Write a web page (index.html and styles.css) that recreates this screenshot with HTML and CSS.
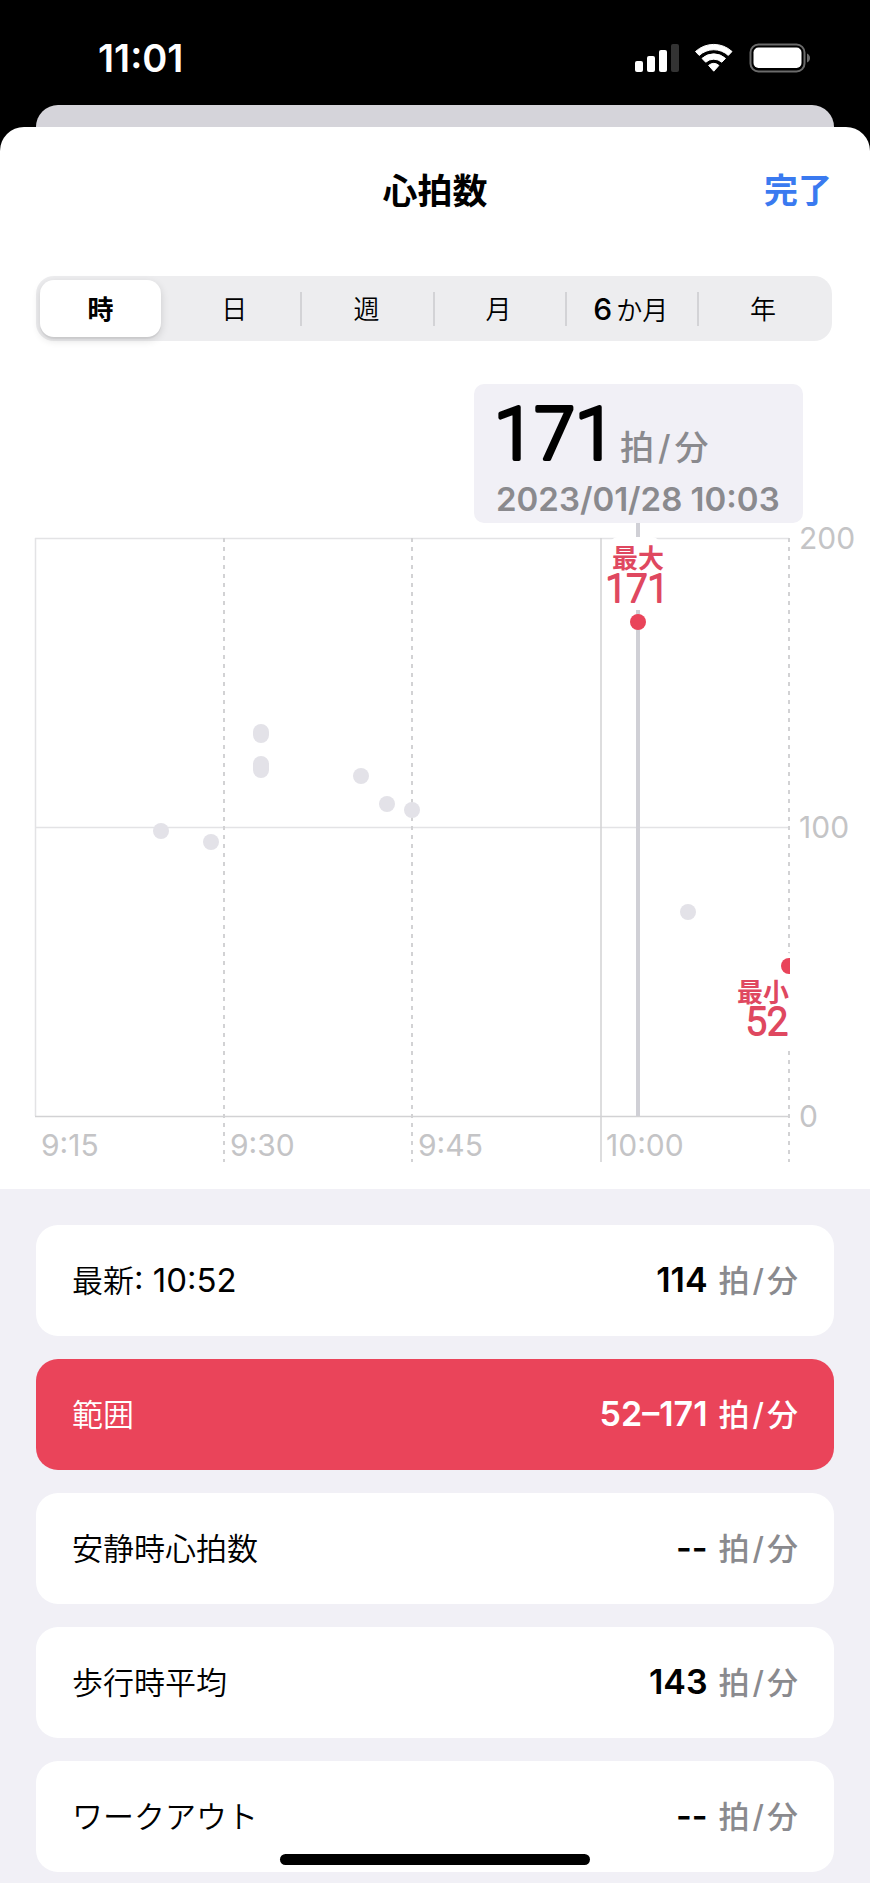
FILE: index.html
```html
<!DOCTYPE html>
<html lang="ja">
<head>
<meta charset="utf-8">
<meta name="viewport" content="width=device-width, initial-scale=1">
<title>心拍数</title>
<link rel="stylesheet" href="styles.css">
</head>
<body>
<div class="screen">
  <header class="status">
    <time class="clock">11:01</time>
    <svg class="status-icons" viewBox="0 0 176 30" width="176" height="30" aria-hidden="true">
      <g fill="#fff">
        <rect x="0" y="18" width="8" height="11" rx="2"/>
        <rect x="12" y="13" width="8" height="16" rx="2"/>
        <rect x="24" y="7" width="8" height="22" rx="2"/>
        <rect x="36" y="1" width="8" height="28" rx="2" fill="#333"/>
        <path d="M60.500 8.500A27 27 0 0 1 97 8.500L93.300 12.400A21.500 21.500 0 0 0 64.200 12.400Z" stroke="#fff" stroke-linejoin="round"/>
        <path d="M67 15.400A17.500 17.500 0 0 1 90.500 15.400L86.800 19.200A12.200 12.200 0 0 0 70.700 19.200Z" stroke="#fff" stroke-linejoin="round"/>
        <path d="M73.600 22.400A8.300 8.300 0 0 1 83.900 22.400L78.750 28.200Z" stroke="#fff" stroke-linejoin="round"/>
        <rect x="118.500" y="4.500" width="48" height="20.500" rx="5"/>
      </g>
      <rect x="115.500" y="1.500" width="54" height="27" rx="8" fill="none" stroke="#6b6b6b" stroke-width="2"/>
      <path d="M172 10.500Q175 12 175 15T172 19.500Z" fill="#6b6b6b"/>
    </svg>
  </header>
  <div class="sheet-behind"></div>
  <main class="sheet">
    <div class="titlebar">
      <h1 class="title">心拍数</h1>
      <button class="done" type="button">完了</button>
    </div>
    <div class="segments" role="group" aria-label="期間">
      <button class="segment selected" type="button" aria-pressed="true">時</button>
      <button class="segment" type="button">日</button>
      <button class="segment divided" type="button">週</button>
      <button class="segment divided" type="button">月</button>
      <button class="segment divided" type="button"><span class="segment-number">6</span>か月</button>
      <button class="segment divided" type="button">年</button>
    </div>
    <svg class="chart" viewBox="0 0 870 848" role="img" aria-label="心拍数のグラフ">
      <defs><clipPath id="plot"><rect x="35" y="180" width="755" height="600"/></clipPath></defs>
      <g class="grid">
        <path d="M35.500 197V775M35 197.500H789M35 486.500H789"/>
        <path class="strong" d="M35 775.500H789M601 197V821"/>
        <path class="dashed" d="M224 197V821M412 197V821M789 197V821"/>
      </g>
      <path class="cursor" d="M638 180V775"/>
      <g class="dot">
        <circle cx="161" cy="490" r="8"/>
        <circle cx="211" cy="501" r="8"/>
        <rect x="253" y="383" width="16" height="19" rx="8"/>
        <rect x="253" y="415" width="16" height="22" rx="8"/>
        <circle cx="361" cy="435" r="8"/>
        <circle cx="387" cy="463" r="8"/>
        <circle cx="412" cy="469" r="8"/>
        <circle cx="688" cy="571" r="8"/>
      </g>
      <g fill="#fff">
        <rect x="610" y="196" width="50" height="42" rx="8"/>
        <rect x="602" y="226" width="70" height="43" rx="10"/>
        <rect x="728" y="612" width="68" height="94" rx="8"/>
      </g>
      <text class="mark" x="638" y="227" text-anchor="middle">最大</text>
      <text class="mark-value" x="637" y="261" text-anchor="middle">171</text>
      <text class="mark" x="789" y="661" text-anchor="end">最小</text>
      <text class="mark-value" x="788" y="694" text-anchor="end">52</text>
      <g class="extreme" clip-path="url(#plot)">
        <circle cx="638" cy="281" r="8"/>
        <circle cx="789" cy="625" r="8"/>
      </g>
      <g class="axis">
        <text x="799" y="208">200</text>
        <text x="799" y="497">100</text>
        <text x="799" y="786">0</text>
        <text x="41" y="815">9:15</text>
        <text x="230" y="815">9:30</text>
        <text x="418" y="815">9:45</text>
        <text x="606" y="815">10:00</text>
      </g>
      <rect x="474" y="43" width="329" height="139" rx="10" fill="#f1f0f6"/>
      <text class="reading" x="494" y="118">171</text>
      <text class="reading-unit" x="620" y="119">拍<tspan dx="4">/</tspan><tspan dx="4">分</tspan></text>
      <text class="reading-date" x="496" y="170">2023/01/28 10:03</text>
    </svg>
    <ul class="cards">
      <li><button class="card" type="button"><span>最新<span class="latin">: 10:52</span></span><span class="value">114<span class="unit">拍<span class="slash">/</span>分</span></span></button></li>
      <li><button class="card active" type="button" aria-pressed="true"><span>範囲</span><span class="value">52–171<span class="unit">拍<span class="slash">/</span>分</span></span></button></li>
      <li><button class="card" type="button"><span>安静時心拍数</span><span class="value">--<span class="unit">拍<span class="slash">/</span>分</span></span></button></li>
      <li><button class="card" type="button"><span>歩行時平均</span><span class="value">143<span class="unit">拍<span class="slash">/</span>分</span></span></button></li>
      <li><button class="card" type="button"><span>ワークアウト</span><span class="value">--<span class="unit">拍<span class="slash">/</span>分</span></span></button></li>
    </ul>
  </main>
  <div class="home-indicator"></div>
</div>
</body>
</html>
```
FILE: styles.css
```css
* { box-sizing: border-box; }

body {
  margin: 0;
  background: #000;
  color: #000;
  font-family: Inter, "Noto Sans CJK JP", sans-serif;
  font-kerning: none;
}

button {
  border: 0;
  padding: 0;
  background: none;
  color: inherit;
  font: inherit;
  font-kerning: none;
}

.screen { position: relative; }

.status {
  display: flex;
  justify-content: space-between;
  align-items: center;
  height: 105px;
  padding: 11px 59px 0 98px;
}

.clock {
  color: #fff;
  font-size: 38px;
  font-weight: 600;
  line-height: 44px;
}

.sheet-behind {
  height: 22px;
  margin: 0 36px;
  border-radius: 22px 22px 0 0;
  background: #d5d4da;
}

.sheet {
  overflow: hidden;
  border-radius: 24px 24px 0 0;
  background: #fff;
}

.titlebar {
  display: grid;
  grid-template-columns: 1fr auto 1fr;
  align-items: center;
  height: 125px;
  padding: 2px 38px 0;
  font-size: 35px;
  line-height: 52px;
}

.title {
  grid-column: 2;
  margin: 0;
  font-size: 35px;
  font-weight: 700;
}

.done {
  justify-self: end;
  color: #3a7af0;
  font-size: 34px;
  font-weight: 700;
}

.segments {
  display: grid;
  grid-template-columns: repeat(6, 1fr);
  height: 65px;
  margin: 24px 38px 0 36px;
  padding-right: 3px;
  border-radius: 18px;
  background: #ededef;
}

.segment {
  padding-top: 2px;
  font-size: 26px;
  font-weight: 350;
  line-height: 40px;
}

.segment.selected {
  margin: 4px 7px 4px 4px;
  border-radius: 14px;
  background: #fff;
  box-shadow: 0 3px 8px rgba(0, 0, 0, 0.14), 0 2px 1px rgba(0, 0, 0, 0.05);
  font-weight: 700;
}

.segment.divided {
  background: linear-gradient(#d3d3d6, #d3d3d6) left center / 2px 34px no-repeat;
}

.segment-number {
  margin-right: 4px;
  font-size: 30px;
  font-weight: 500;
}

.chart {
  display: block;
  width: 100%;
}

.grid path {
  fill: none;
  stroke: #e3e3e5;
  stroke-width: 1.5;
}

.grid .strong { stroke: #d2d2d4; }

.grid .dashed {
  stroke: #d2d2d4;
  stroke-width: 2;
  stroke-dasharray: 4 5;
}

.cursor {
  stroke: #d0d0d6;
  stroke-width: 4;
}

.dot { fill: #e3e2e8; }

.extreme { fill: #e9445a; }

.mark {
  fill: #df4860;
  font-size: 26px;
  font-weight: 700;
}

.mark-value {
  fill: #df4860;
  stroke: #df4860;
  stroke-width: 2px;
  stroke-linejoin: round;
  font-family: Roboto, sans-serif;
  font-size: 38px;
  font-weight: 300;
}

.axis {
  fill: #c4c4c6;
  font-size: 30px;
}

.reading {
  stroke: #000;
  stroke-width: 4px;
  stroke-linejoin: round;
  font-family: Roboto, sans-serif;
  font-size: 73px;
  font-weight: 300;
}

.reading-unit {
  fill: #8a8a8e;
  font-size: 34px;
  font-weight: 500;
}

.reading-date {
  fill: #8a8a8e;
  font-size: 33px;
  font-weight: 600;
}

.cards {
  display: flex;
  flex-direction: column;
  gap: 23px;
  margin: 0;
  padding: 36px 36px 11px;
  background: #f1f0f6;
  list-style: none;
}

.card {
  display: flex;
  justify-content: space-between;
  align-items: center;
  width: 100%;
  height: 111px;
  padding: 0 36px;
  border-radius: 22px;
  background: #fff;
  font-size: 31px;
  font-weight: 350;
  line-height: 46px;
}

.card.active {
  background: #ea445a;
  color: #fff;
}

.latin {
  font-size: 33px;
  font-weight: 400;
}

.value {
  display: flex;
  align-items: baseline;
  gap: 11px;
  font-size: 34px;
  font-weight: 600;
}

.unit {
  color: #8a8a8e;
  font-size: 31px;
  font-weight: 500;
}

.active .unit { color: #fff; }

.slash { margin: 0 3px; }

.home-indicator {
  position: absolute;
  bottom: 18px;
  left: 50%;
  width: 310px;
  height: 11px;
  border-radius: 6px;
  background: #000;
  transform: translateX(-50%);
}
```
